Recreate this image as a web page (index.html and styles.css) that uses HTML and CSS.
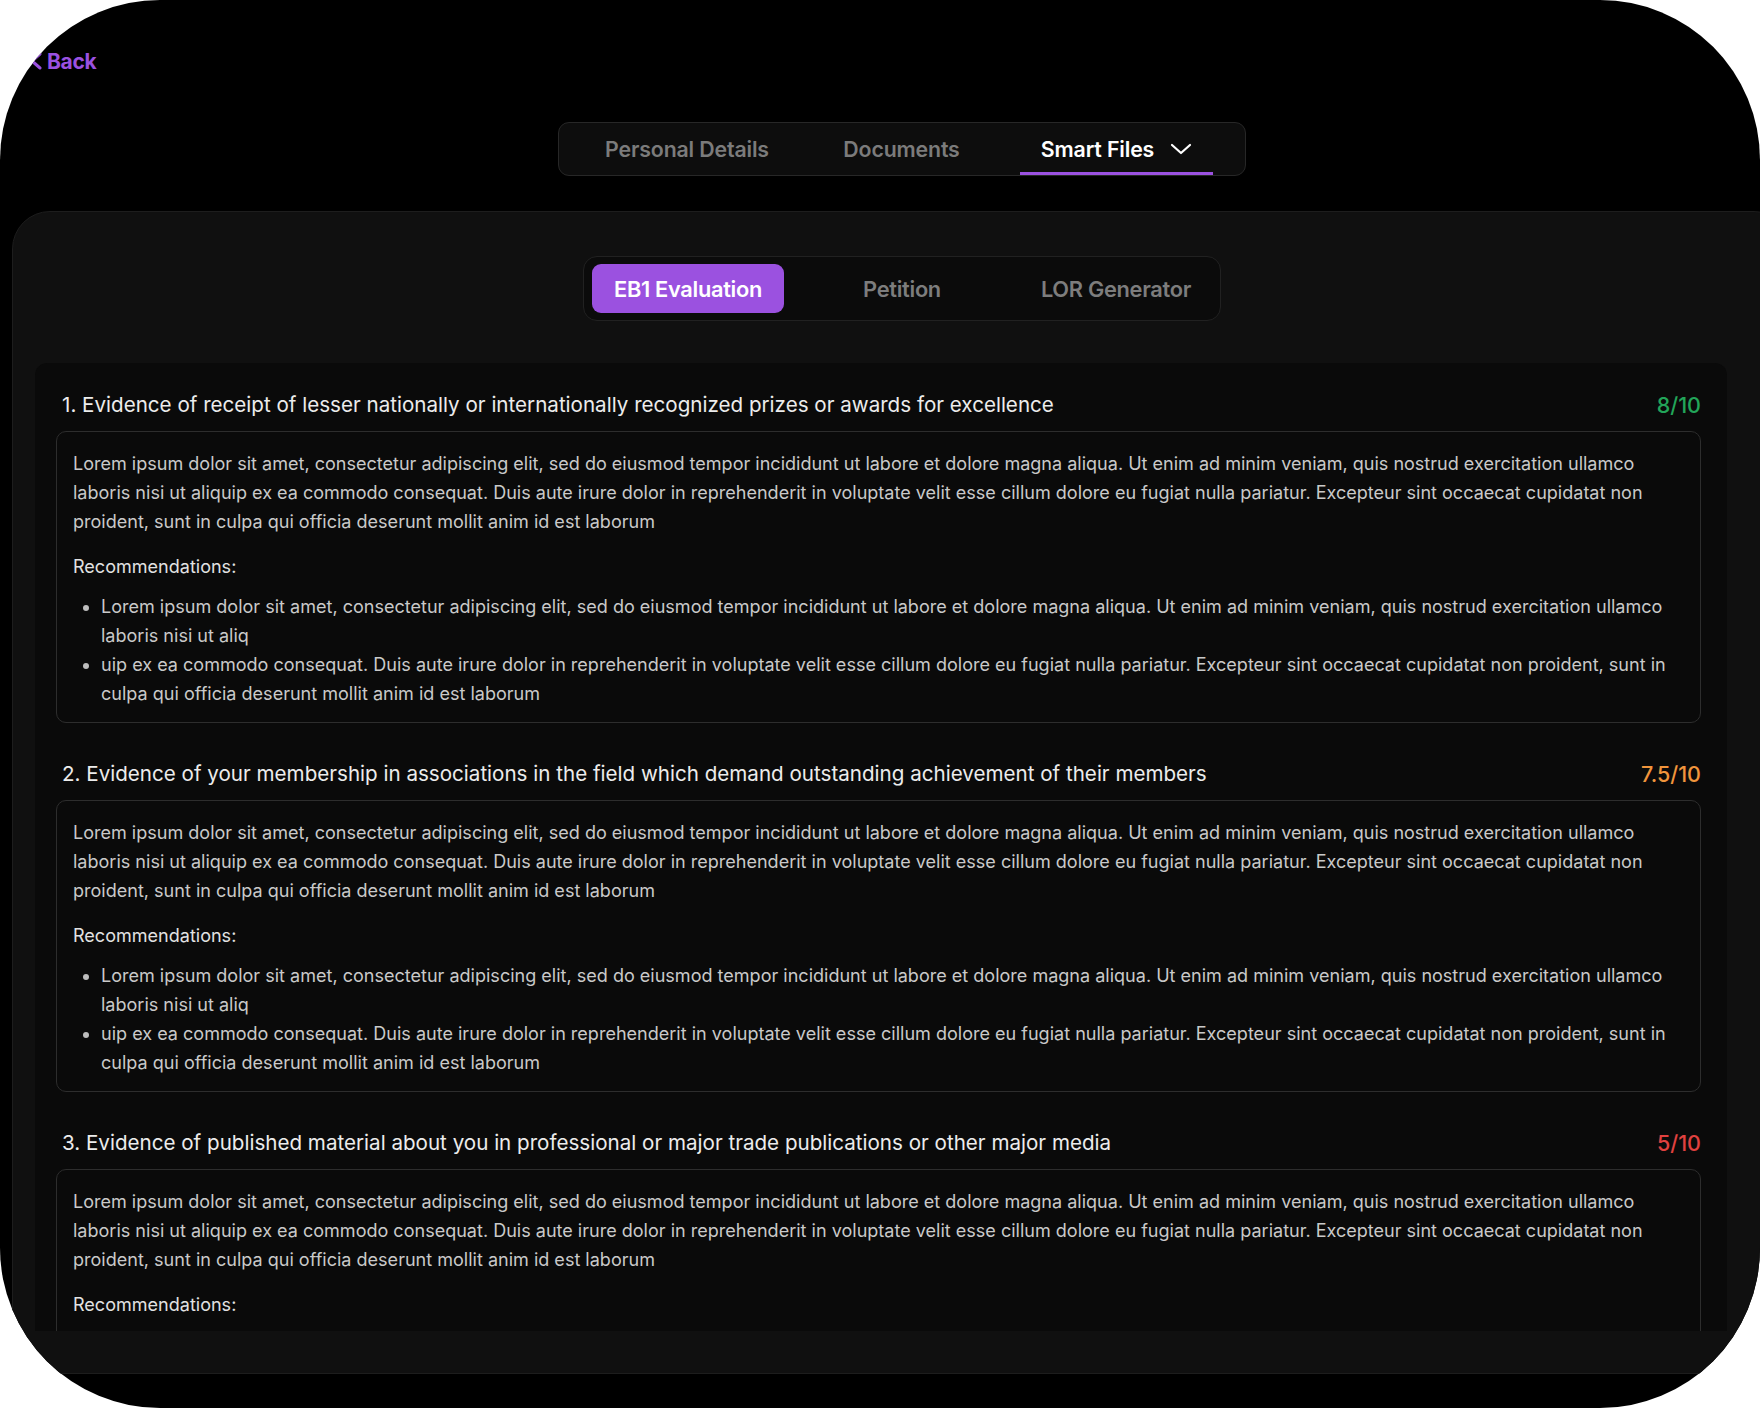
FILE: index.html
```html
<!DOCTYPE html>
<html lang="en">
<head>
<meta charset="utf-8">
<title>EB1 Evaluation</title>
<link rel="stylesheet" href="styles.css">
</head>
<body>
<div class="screen">
  <a class="back" href="#">
    <svg class="back-icon" width="15" height="18" viewBox="0 0 15 18"><path d="M12 2 L4 9 L12 16" fill="none" stroke="#9b51e0" stroke-width="3" stroke-linecap="round" stroke-linejoin="round"/></svg>
    <span>Back</span>
  </a>
  <div class="column">
    <nav class="top-tabs">
      <div class="top-tab tab-personal">Personal Details</div>
      <div class="top-tab tab-documents">Documents</div>
      <div class="top-tab tab-smart active">Smart Files
        <svg class="caret" width="22" height="14" viewBox="0 0 22 14"><path d="M2 3 L11 11 L20 3" fill="none" stroke="#ffffff" stroke-width="2.2" stroke-linecap="round" stroke-linejoin="round"/></svg>
      </div>
    </nav>
    <section class="panel">
      <div class="sub-tabs">
        <div class="sub-tab active">EB1 Evaluation</div>
        <div class="sub-tab">Petition</div>
        <div class="sub-tab">LOR Generator</div>
      </div>
      <div class="card">
        <article class="item">
          <div class="item-head">
            <h3 class="item-title">1. Evidence of receipt of lesser nationally or internationally recognized prizes or awards for excellence</h3>
            <span class="score good">8/10</span>
          </div>
          <div class="item-box">
            <p class="summary">Lorem ipsum dolor sit amet, consectetur adipiscing elit, sed do eiusmod tempor incididunt ut labore et dolore magna aliqua. Ut enim ad minim veniam, quis nostrud exercitation ullamco laboris nisi ut aliquip ex ea commodo consequat. Duis aute irure dolor in reprehenderit in voluptate velit esse cillum dolore eu fugiat nulla pariatur. Excepteur sint occaecat cupidatat non proident, sunt in culpa qui officia deserunt mollit anim id est laborum</p>
            <p class="rec-label">Recommendations:</p>
            <ul class="rec-list">
              <li>Lorem ipsum dolor sit amet, consectetur adipiscing elit, sed do eiusmod tempor incididunt ut labore et dolore magna aliqua. Ut enim ad minim veniam, quis nostrud exercitation ullamco laboris nisi ut aliq</li>
              <li>uip ex ea commodo consequat. Duis aute irure dolor in reprehenderit in voluptate velit esse cillum dolore eu fugiat nulla pariatur. Excepteur sint occaecat cupidatat non proident, sunt in culpa qui officia deserunt mollit anim id est laborum</li>
            </ul>
          </div>
        </article>
        <article class="item">
          <div class="item-head">
            <h3 class="item-title">2. Evidence of your membership in associations in the field which demand outstanding achievement of their members</h3>
            <span class="score mid">7.5/10</span>
          </div>
          <div class="item-box">
            <p class="summary">Lorem ipsum dolor sit amet, consectetur adipiscing elit, sed do eiusmod tempor incididunt ut labore et dolore magna aliqua. Ut enim ad minim veniam, quis nostrud exercitation ullamco laboris nisi ut aliquip ex ea commodo consequat. Duis aute irure dolor in reprehenderit in voluptate velit esse cillum dolore eu fugiat nulla pariatur. Excepteur sint occaecat cupidatat non proident, sunt in culpa qui officia deserunt mollit anim id est laborum</p>
            <p class="rec-label">Recommendations:</p>
            <ul class="rec-list">
              <li>Lorem ipsum dolor sit amet, consectetur adipiscing elit, sed do eiusmod tempor incididunt ut labore et dolore magna aliqua. Ut enim ad minim veniam, quis nostrud exercitation ullamco laboris nisi ut aliq</li>
              <li>uip ex ea commodo consequat. Duis aute irure dolor in reprehenderit in voluptate velit esse cillum dolore eu fugiat nulla pariatur. Excepteur sint occaecat cupidatat non proident, sunt in culpa qui officia deserunt mollit anim id est laborum</li>
            </ul>
          </div>
        </article>
        <article class="item">
          <div class="item-head">
            <h3 class="item-title">3. Evidence of published material about you in professional or major trade publications or other major media</h3>
            <span class="score low">5/10</span>
          </div>
          <div class="item-box">
            <p class="summary">Lorem ipsum dolor sit amet, consectetur adipiscing elit, sed do eiusmod tempor incididunt ut labore et dolore magna aliqua. Ut enim ad minim veniam, quis nostrud exercitation ullamco laboris nisi ut aliquip ex ea commodo consequat. Duis aute irure dolor in reprehenderit in voluptate velit esse cillum dolore eu fugiat nulla pariatur. Excepteur sint occaecat cupidatat non proident, sunt in culpa qui officia deserunt mollit anim id est laborum</p>
            <p class="rec-label">Recommendations:</p>
            <ul class="rec-list">
              <li>Lorem ipsum dolor sit amet, consectetur adipiscing elit, sed do eiusmod tempor incididunt ut labore et dolore magna aliqua. Ut enim ad minim veniam, quis nostrud exercitation ullamco laboris nisi ut aliq</li>
              <li>uip ex ea commodo consequat. Duis aute irure dolor in reprehenderit in voluptate velit esse cillum dolore eu fugiat nulla pariatur. Excepteur sint occaecat cupidatat non proident, sunt in culpa qui officia deserunt mollit anim id est laborum</li>
            </ul>
          </div>
        </article>
      </div>
    </section>
  </div>
</div>
</body>
</html>
```
FILE: styles.css
```css
* { box-sizing: border-box; }
html, body { margin: 0; padding: 0; background: #ffffff; }
body { font-family: "Inter", "Noto Sans", "Liberation Sans", sans-serif; }

.screen {
  width: 1760px;
  height: 1408px;
  background: #000000;
  border-radius: 160px;
  overflow: hidden;
  display: flex;
  flex-direction: column;
  padding-top: 47px;
}

.back {
  display: flex;
  align-items: center;
  gap: 4px;
  margin-left: 28px;
  height: 28px;
  color: #9b51e0;
  text-decoration: none;
  font-size: 21px;
  font-weight: 700;
  letter-spacing: -0.3px;
  align-self: flex-start;
}
.back-icon { display: block; }

.column {
  margin-left: 12px;
  width: 1780px;
  flex-shrink: 0;
  display: flex;
  flex-direction: column;
  align-items: center;
  margin-top: 47px;
}

.top-tabs {
  display: flex;
  align-items: stretch;
  width: 688px;
  height: 54px;
  padding: 0 32px 0 24px;
  gap: 29px;
  background: #0d0d0d;
  border: 1px solid #272727;
  border-radius: 11px;
}
.top-tab {
  display: flex;
  align-items: center;
  justify-content: center;
  gap: 16px;
  font-size: 21.3px;
  font-weight: 600;
  letter-spacing: -0.15px;
  color: #7b7b7b;
  border-bottom: 3px solid transparent;
  padding-top: 3px;
  flex-shrink: 0;
}
.tab-personal { width: 208px; }
.tab-documents { width: 163px; }
.tab-smart { width: 193px; margin-left: 8px; }
.top-tab.active {
  color: #ffffff;
  border-bottom-color: #9b51e0;
}
.caret { display: block; }

.panel {
  align-self: stretch;
  margin-top: 35px;
  background: #101010;
  border: 1px solid #1d1d1d;
  border-radius: 38px;
  padding: 44px 0 42px 0;
  display: flex;
  flex-direction: column;
  align-items: center;
}

.sub-tabs {
  display: grid;
  grid-template-columns: repeat(3, 192px);
  column-gap: 22px;
  padding: 7px 8px;
  height: 65px;
  background: #0b0b0b;
  border: 1px solid #212121;
  border-radius: 14px;
}
.sub-tab {
  display: flex;
  align-items: center;
  justify-content: center;
  border-radius: 9px;
  font-size: 21.8px;
  font-weight: 600;
  letter-spacing: -0.3px;
  color: #7d7d7d;
}
.sub-tab.active {
  background: #9b51e0;
  color: #ffffff;
}

.card {
  align-self: flex-start;
  margin-left: 22px;
  margin-top: 42px;
  width: 1692px;
  height: 968px;
  overflow: hidden;
  background: #0a0a0a;
  border-radius: 12px 12px 0 0;
  padding: 28px 26px 0 21px;
  display: flex;
  flex-direction: column;
  gap: 37px;
}

.item { display: flex; flex-direction: column; gap: 12px; flex-shrink: 0; }
.item-head {
  display: flex;
  justify-content: space-between;
  align-items: center;
  padding-left: 6px;
  height: 28px;
}
.item-title {
  margin: 0;
  font-size: 20.6px;
  font-weight: 400;
  color: #ececec;
  line-height: 28px;
}
.score {
  font-size: 21.5px;
  font-weight: 500;
  line-height: 28px;
}
.score.good { color: #22a559; }
.score.mid { color: #f0953c; }
.score.low { color: #e0413f; }

.item-box {
  border: 1px solid #2d2d2d;
  border-radius: 10px;
  padding: 17px 16px 14px 16px;
  font-size: 18.05px;
  line-height: 29px;
  color: #c9c9c9;
}
.summary { margin: 0; }
.rec-label { margin: 16px 0 0 0; color: #e2e2e2; }
.rec-list {
  margin: 11px 0 0 0;
  padding-left: 28px;
}
.rec-list li::marker { color: #bdbdbd; }
```
